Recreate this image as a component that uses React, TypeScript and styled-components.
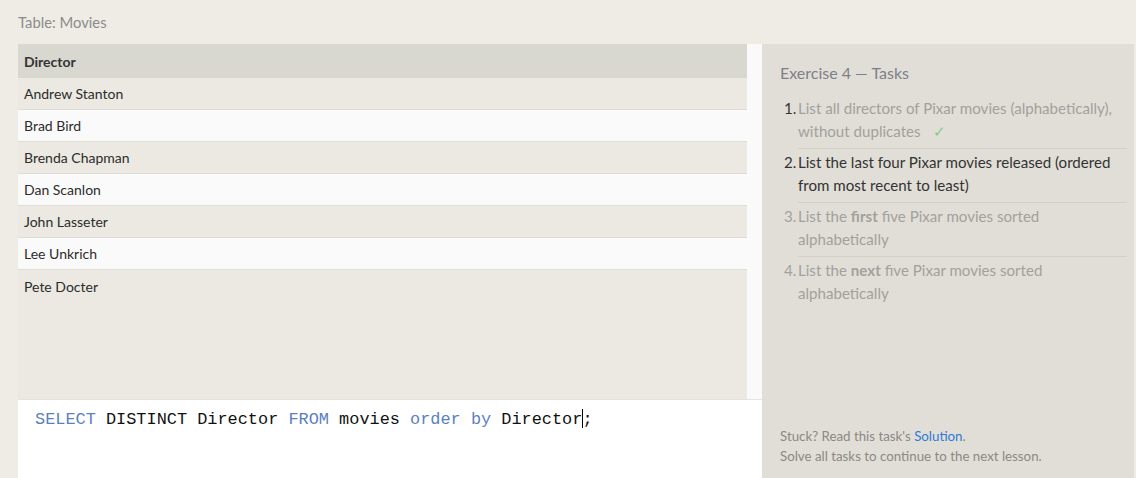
import React from 'react'
import styled, { createGlobalStyle } from 'styled-components'

const GlobalStyle = createGlobalStyle`
  html, body {
    margin: 0;
    padding: 0;
    background: #efece6;
    font-family: Lato, "Open Sans", sans-serif;
  }
`

const Page = styled.div`
  width: 1136px;
  height: 478px;
  overflow: hidden;
  display: flex;
  flex-direction: column;
`

const TableTitle = styled.div`
  height: 44px;
  padding-left: 18px;
  box-sizing: border-box;
  display: flex;
  align-items: center;
  font-size: 14.8px;
  color: #8b8b8b;
`

const Workspace = styled.div`
  flex: 1;
  display: grid;
  grid-template-columns: 744px 372px;
  padding-left: 18px;
  min-height: 0;
`

const LeftColumn = styled.div`
  display: flex;
  flex-direction: column;
  min-height: 0;
`

const ResultArea = styled.div`
  flex: 1;
  display: flex;
  min-height: 0;
`

const ResultTable = styled.div`
  flex: 1;
  background: #ebe9e2;
`

const ScrollStrip = styled.div`
  width: 15px;
  background: #fafafa;
`

const HeaderCell = styled.div`
  height: 34px;
  padding-left: 6px;
  display: flex;
  align-items: center;
  background: #d9d8d0;
  font-weight: 700;
  font-size: 14px;
  color: #333;
`

const Row = styled.div<{ $odd: boolean }>`
  height: 32px;
  padding-left: 6px;
  display: flex;
  align-items: center;
  box-sizing: border-box;
  background: ${p => (p.$odd ? '#fafafa' : '#ebe9e2')};
  border-bottom: 1px solid #dedcd6;
  font-size: 14px;
  color: #2c2c2c;

  &:last-child {
    border-bottom: none;
  }
`

const Editor = styled.div`
  height: 79px;
  background: #fff;
  border-top: 1px solid #e4e3df;
  box-sizing: border-box;
  padding: 9px 17px;
  font-family: "Liberation Mono", monospace;
  font-size: 16.9px;
  line-height: 20px;
  color: #111;
  white-space: pre;
`

const Keyword = styled.span`
  color: #5b7fc0;
`

const Caret = styled.span`
  display: inline-block;
  width: 1px;
  height: 19px;
  margin-right: -1px;
  vertical-align: -4px;
  background: #000;
`

const TaskPanel = styled.div`
  background: #e1ded7;
  padding: 19px 7px 0 18px;
  display: flex;
  flex-direction: column;
`

const PanelTitle = styled.div`
  font-size: 16px;
  color: #7d8088;
  margin-bottom: 15px;
`

const TaskList = styled.ol`
  margin: 0;
  padding: 0 0 0 4px;
  list-style: none;
`

const TaskItem = styled.li<{ $state: 'done' | 'current' | 'todo' }>`
  display: flex;
  align-items: flex-start;
  font-size: 15.1px;
  line-height: 23px;
  margin-bottom: 2px;
  color: ${p => (p.$state === 'current' ? '#333' : '#a3a19c')};
`

const TaskNumber = styled.span<{ $done?: boolean }>`
  width: 14px;
  flex-shrink: 0;
  color: ${p => (p.$done ? '#333' : 'inherit')};
`

const TaskBody = styled.span<{ $last?: boolean }>`
  flex: 1;
  padding: 0 12px 5px 0;
  border-bottom: 1px solid ${p => (p.$last ? 'transparent' : '#d3d0c7')};
`

const Check = styled.span`
  color: #7fcf80;
  margin-left: 12px;
`

const TaskFooter = styled.div`
  margin-top: auto;
  padding-bottom: 12px;
  font-size: 13.3px;
  line-height: 20px;
  color: #8b8985;
`

const SolutionLink = styled.a`
  color: #2f7ad8;
  text-decoration: none;
`

const directors = [
  'Andrew Stanton',
  'Brad Bird',
  'Brenda Chapman',
  'Dan Scanlon',
  'John Lasseter',
  'Lee Unkrich',
  'Pete Docter',
]

export default function App() {
  return (
    <>
      <GlobalStyle />
      <Page>
        <TableTitle>Table: Movies</TableTitle>
        <Workspace>
          <LeftColumn>
            <ResultArea>
              <ResultTable>
                <HeaderCell>Director</HeaderCell>
                {directors.map((d, i) => (
                  <Row key={d} $odd={i % 2 === 1}>
                    {d}
                  </Row>
                ))}
              </ResultTable>
              <ScrollStrip />
            </ResultArea>
            <Editor>
              <Keyword>SELECT</Keyword> DISTINCT Director <Keyword>FROM</Keyword> movies{' '}
              <Keyword>order by</Keyword> Director<Caret />;
            </Editor>
          </LeftColumn>
          <TaskPanel>
            <PanelTitle>Exercise 4 — Tasks</PanelTitle>
            <TaskList>
              <TaskItem $state="done">
                <TaskNumber $done>1.</TaskNumber>
                <TaskBody>
                  List all directors of Pixar movies (alphabetically), without duplicates
                  <Check>✓</Check>
                </TaskBody>
              </TaskItem>
              <TaskItem $state="current">
                <TaskNumber>2.</TaskNumber>
                <TaskBody>List the last four Pixar movies released (ordered from most recent to least)</TaskBody>
              </TaskItem>
              <TaskItem $state="todo">
                <TaskNumber>3.</TaskNumber>
                <TaskBody>
                  List the <b>first</b> five Pixar movies sorted alphabetically
                </TaskBody>
              </TaskItem>
              <TaskItem $state="todo">
                <TaskNumber>4.</TaskNumber>
                <TaskBody $last>
                  List the <b>next</b> five Pixar movies sorted alphabetically
                </TaskBody>
              </TaskItem>
            </TaskList>
            <TaskFooter>
              Stuck? Read this task's <SolutionLink href="#">Solution</SolutionLink>.
              <br />
              Solve all tasks to continue to the next lesson.
            </TaskFooter>
          </TaskPanel>
        </Workspace>
      </Page>
    </>
  )
}
